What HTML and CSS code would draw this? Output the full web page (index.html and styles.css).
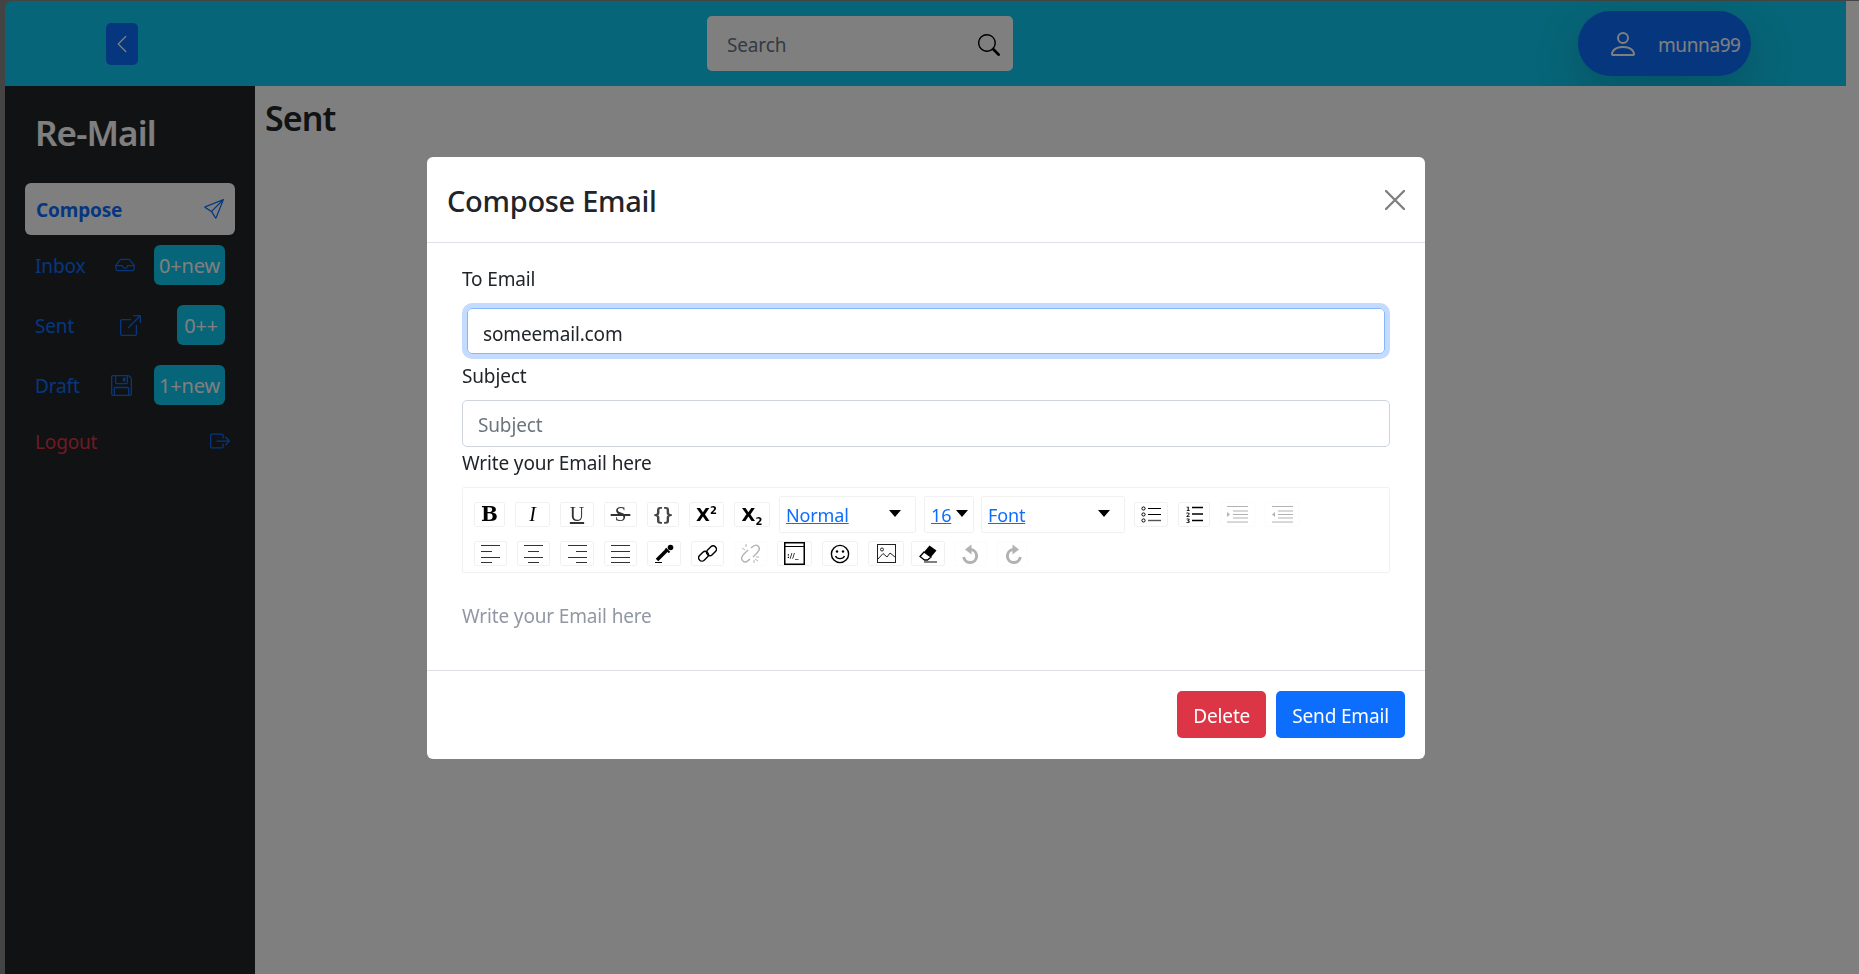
FILE: index.html
```html
<!doctype html>
<html>
<head>
<meta charset="utf-8">
<title>Re-Mail</title>
	<link rel="stylesheet" href="styles.css">
</head>
<body>
	<div class="frame">
		<div class="app">
			<div class="topbar">
				<div class="back">
					<svg width="20" height="20" viewBox="0 0 16 16" fill="#fff"><path fill-rule="evenodd" d="M11.354 1.646a.5.5 0 0 1 0 .708L5.707 8l5.647 5.646a.5.5 0 0 1-.708.708l-6-6a.5.5 0 0 1 0-.708l6-6a.5.5 0 0 1 .708 0z"/></svg>
				</div>
				<div class="search">
					<span>Search</span>
					<svg width="22" height="22" viewBox="0 0 16 16" fill="#000"><path d="M11.742 10.344a6.5 6.5 0 1 0-1.397 1.398h-.001c.03.04.062.078.098.115l3.85 3.85a1 1 0 0 0 1.415-1.414l-3.85-3.85a1.007 1.007 0 0 0-.115-.1zM12 6.5a5.5 5.5 0 1 1-11 0 5.5 5.5 0 0 1 11 0z"/></svg>
				</div>
				<div class="user">
					<svg width="32" height="32" viewBox="0 0 16 16" fill="#fff"><path d="M8 8a3 3 0 1 0 0-6 3 3 0 0 0 0 6zm2-3a2 2 0 1 1-4 0 2 2 0 0 1 4 0zm4 8c0 1-1 1-1 1H3s-1 0-1-1 1-4 6-4 6 3 6 4zm-1-.004c-.001-.246-.154-.986-.832-1.664C11.516 10.68 10.289 10 8 10c-2.29 0-3.516.68-4.168 1.332-.678.678-.83 1.418-.832 1.664h10z"/></svg>
					<span>munna99</span>
				</div>
			</div>
			<div class="under">
				<div class="sidebar">
					<div class="brand">Re-Mail</div>
					<div class="compose">
						<span>Compose</span>
						<svg width="20" height="20" viewBox="0 0 16 16" fill="#0d6efd"><path d="M15.854.146a.5.5 0 0 1 .11.54l-5.819 14.547a.75.75 0 0 1-1.329.124l-3.178-4.995L.643 7.184a.75.75 0 0 1 .124-1.33L15.314.037a.5.5 0 0 1 .54.11ZM6.636 10.07l2.761 4.338L14.13 2.576 6.636 10.07Zm6.787-8.201L1.591 6.602l4.339 2.76 7.494-7.493Z"/></svg>
					</div>
					<div class="navrow">
						<span>Inbox</span>
						<svg class="navicon" width="20" height="20" viewBox="0 0 16 16" fill="#0d6efd"><path d="M4.98 4a.5.5 0 0 0-.39.188L1.54 8H6a.5.5 0 0 1 .5.5 1.5 1.5 0 1 0 3 0A.5.5 0 0 1 10 8h4.46l-3.05-3.812A.5.5 0 0 0 11.02 4H4.98zm9.954 5H10.45a2.5 2.5 0 0 1-4.9 0H1.066l.32 2.562a.5.5 0 0 0 .497.438h12.234a.5.5 0 0 0 .496-.438L14.933 9zM3.809 3.563A1.5 1.5 0 0 1 4.981 3h6.038a1.5 1.5 0 0 1 1.172.563l3.7 4.625a.5.5 0 0 1 .105.374l-.39 3.124A1.5 1.5 0 0 1 14.117 13H1.883a1.5 1.5 0 0 1-1.489-1.314l-.39-3.124a.5.5 0 0 1 .106-.374l3.7-4.625z"/></svg>
						<span class="badge">0+new</span>
					</div>
					<div class="navrow">
						<span>Sent</span>
						<svg class="navicon" width="21" height="21" viewBox="0 0 16 16" fill="#0d6efd"><path d="M8.636 3.5a.5.5 0 0 0-.5-.5H1.5A1.5 1.5 0 0 0 0 4.5v10A1.5 1.5 0 0 0 1.5 16h10a1.5 1.5 0 0 0 1.5-1.5V7.864a.5.5 0 0 0-1 0V14.5a.5.5 0 0 1-.5.5h-10a.5.5 0 0 1-.5-.5v-10a.5.5 0 0 1 .5-.5h6.636a.5.5 0 0 0 .5-.5z"/><path d="M16 .5a.5.5 0 0 0-.5-.5h-5a.5.5 0 0 0 0 1h3.793L6.146 9.146a.5.5 0 1 0 .708.708L15 1.707V5.5a.5.5 0 0 0 1 0v-5z"/></svg>
						<span class="badge plus">0++</span>
					</div>
					<div class="navrow">
						<span>Draft</span>
						<svg class="navicon" width="21" height="21" viewBox="0 0 16 16" fill="#0d6efd"><path d="M11 2H9v3h2V2Z"/><path d="M1.5 0h11.586a1.5 1.5 0 0 1 1.06.44l1.415 1.414A1.5 1.5 0 0 1 16 2.914V14.5a1.5 1.5 0 0 1-1.5 1.5h-13A1.5 1.5 0 0 1 0 14.5v-13A1.5 1.5 0 0 1 1.5 0ZM1 1.5v13a.5.5 0 0 0 .5.5H2v-4.5A1.5 1.5 0 0 1 3.5 9h9a1.5 1.5 0 0 1 1.5 1.5V15h.5a.5.5 0 0 0 .5-.5V2.914a.5.5 0 0 0-.146-.353l-1.415-1.415A.5.5 0 0 0 13.086 1H13v4.5A1.5 1.5 0 0 1 11.5 7h-7A1.5 1.5 0 0 1 3 5.5V1H1.5a.5.5 0 0 0-.5.5Zm3 4a.5.5 0 0 0 .5.5h7a.5.5 0 0 0 .5-.5V1H4v4.5ZM3 15h10v-4.5a.5.5 0 0 0-.5-.5h-9a.5.5 0 0 0-.5.5V15Z"/></svg>
						<span class="badge">1+new</span>
					</div>
					<div class="navrow logout">
						<span>Logout</span>
						<svg width="20" height="20" viewBox="0 0 16 16" fill="#0d6efd"><path d="M10 12.5a.5.5 0 0 1-.5.5h-8a.5.5 0 0 1-.5-.5v-9a.5.5 0 0 1 .5-.5h8a.5.5 0 0 1 .5.5v2a.5.5 0 0 0 1 0v-2A1.5 1.5 0 0 0 9.5 2h-8A1.5 1.5 0 0 0 0 3.5v9A1.5 1.5 0 0 0 1.5 14h8a1.5 1.5 0 0 0 1.5-1.5v-2a.5.5 0 0 0-1 0v2z"/><path d="M15.854 8.354a.5.5 0 0 0 0-.708l-3-3a.5.5 0 0 0-.708.708L14.293 7.5H5.5a.5.5 0 0 0 0 1h8.793l-2.147 2.146a.5.5 0 0 0 .708.708l3-3z"/></svg>
					</div>
				</div>
				<div class="main">
					<h2 class="heading">Sent</h2>
				</div>
			</div>
		</div>
		<div class="gutter"></div>
	</div>

	<div class="backdrop">
		<div class="modal">
			<div class="modal-head">
				<div class="modal-title">Compose Email</div>
				<svg width="20" height="20" viewBox="0 0 20 20" stroke="#808080" stroke-width="2.4" stroke-linecap="round"><path d="M1 1L19 19M19 1L1 19"/></svg>
			</div>
			<div class="modal-body">
				<div class="label first">To Email</div>
				<div class="input focused">someemail.com</div>
				<div class="label second">Subject</div>
				<div class="input placeholder">Subject</div>
				<div class="label third">Write your Email here</div>

				<div class="toolbar">
					<div class="toolrow">
						<span class="tool w31 t-bold">B</span>
						<span class="tool w35 t-ital">I</span>
						<span class="tool w34 t-under">U</span>
						<span class="tool w33 t-strike"><span>&thinsp;S&thinsp;</span></span>
						<span class="tool w32 t-code">{}</span>
						<span class="tool w35 t-sup"><span>X<sup>2</sup></span></span>
						<span class="tool w36 t-sup"><span>X<sub>2</sub></span></span>
						<div class="drop w137 pull1"><a>Normal</a><i class="caret"></i></div>
						<div class="drop w50 pull2 tight"><a>16</a><i class="caret"></i></div>
						<div class="drop w144 pull3"><a>Font</a><i class="caret"></i></div>
						<span class="tool w34 pull1">
							<svg width="20" height="17" viewBox="0 0 20 17" fill="none" stroke="#000"><circle cx="2.5" cy="2.5" r="1.6"/><circle cx="2.5" cy="8.5" r="1.6"/><circle cx="2.5" cy="14.5" r="1.6"/><path d="M7 2.5H20M7 8.5H20"/><path d="M7 14.5H20" stroke="#555" stroke-width="1.4"/></svg>
						</span>
						<span class="tool w32">
							<svg width="17" height="17" viewBox="0 0 17 17" fill="#000"><text x="0" y="5" class="mini">1</text><text x="0" y="11" class="mini">2</text><text x="0" y="17" class="mini">3</text><path d="M6 1.5H17M6 8H17M6 14.5H17" stroke="#000" stroke-width="1.4"/></svg>
						</span>
						<span class="tool w35 off">
							<svg width="21" height="17" viewBox="0 0 21 17" fill="#000" stroke="none"><path d="M0 6L3 8.5L0 11Z"/><path d="M0 .5H21M6 5H21M6 8.5H21M6 12H21M0 16H21" stroke="#000" stroke-width="1.2"/></svg>
						</span>
						<span class="tool w35 off">
							<svg width="21" height="17" viewBox="0 0 21 17" fill="#000" stroke="none"><path d="M3 6L0 8.5L3 11Z"/><path d="M0 .5H21M6 5H21M6 8.5H21M6 12H21M0 16H21" stroke="#000" stroke-width="1.2"/></svg>
						</span>
					</div>
					<div class="toolrow">
						<span class="tool w33">
							<svg width="19" height="18" viewBox="0 0 19 18" stroke="#333"><path d="M0 .5H19M0 6.500H11M0 12.500H19M0 17.500H11"/></svg>
						</span>
						<span class="tool w33">
							<svg width="19" height="18" viewBox="0 0 19 18" stroke="#333"><path d="M0 .5H19M4 6.500H15M0 12.500H19M4 17.500H15"/></svg>
						</span>
						<span class="tool w34">
							<svg width="19" height="18" viewBox="0 0 19 18" stroke="#333"><path d="M0 .5H19M8 6.500H19M0 12.500H19M8 17.500H19"/></svg>
						</span>
						<span class="tool w33">
							<svg width="19" height="18" viewBox="0 0 19 18" stroke="#333"><path d="M0 .5H19M0 6.500H19M0 12.500H19M0 17.500H19"/></svg>
						</span>
						<span class="tool w34">
							<svg width="19" height="19" viewBox="0 0 19 19"><path d="M2 16L12 6" stroke="#000" stroke-width="3.500"/><path d="M10.500 4.500L14.500 8.500" stroke="#000" stroke-width="2"/><circle cx="15.500" cy="3.500" r="2.800" fill="#000"/><path d="M0 18.500H7" stroke="#000"/></svg>
						</span>
						<span class="tool w33">
							<svg width="19" height="19" viewBox="0 0 19 19" fill="none" stroke="#000" stroke-width="1.400"><rect x="0" y="9" width="11" height="6.500" rx="3.200" transform="rotate(-45 5.500 12.200)"/><rect x="8" y="3.500" width="11" height="6.500" rx="3.200" transform="rotate(-45 13.500 6.700)"/></svg>
						</span>
						<span class="tool w33 off">
							<svg width="19" height="19" viewBox="0 0 19 19" fill="none" stroke="#000" stroke-width="1.400"><path d="M7 6L3 10C0 13 0 15 2 17S6 18 9 15"/><path d="M12 13L16 9C19 6 19 4 17 2S13 1 10 4"/><path d="M1 4L4 6M5 0V3M14 15L17 17M18 13H15M13 16V19" stroke-width="1"/></svg>
						</span>
						<span class="tool w35">
							<svg width="21" height="23" viewBox="0 0 21 23"><rect x=".75" y=".75" width="19.500" height="21.500" fill="none" stroke="#000" stroke-width="1.500"/><path d="M0 4.500H21" stroke="#000"/><text x="3" y="16" class="mini wide">://_</text></svg>
						</span>
						<span class="tool w36">
							<svg width="20" height="20" viewBox="0 0 20 20" fill="none" stroke="#000" stroke-width="1.400"><circle cx="10" cy="10" r="8.600"/><circle cx="7" cy="7.500" r="1.200" fill="#000" stroke="none"/><circle cx="13" cy="7.500" r="1.200" fill="#000" stroke="none"/><path d="M5.500 12C7 15.500 13 15.500 14.500 12"/></svg>
						</span>
						<span class="tool w36">
							<svg width="19" height="19" viewBox="0 0 19 19" fill="none" stroke="#222"><rect x=".5" y=".5" width="18" height="18"/><circle cx="5" cy="5.500" r="1.500"/><path d="M1 15L6 9.500L10 13L13 9L18 13"/></svg>
						</span>
						<span class="tool w34 pull3">
							<svg width="19" height="19" viewBox="0 0 19 19"><path d="M10.500 1.500L17.500 6.500L12 13L5 8Z" fill="#000"/><path d="M5 8L1 12.500L5.500 16H8.500L12 13Z" fill="#fff" stroke="#000" stroke-width="1.300"/><path d="M5 18H18" stroke="#000"/></svg>
						</span>
						<span class="tool w32 off">
							<svg width="18" height="20" viewBox="0 0 18 20" fill="none"><path d="M1.700 13A6.500 6.500 0 1 0 9 5.600" stroke="#000" stroke-width="3"/><path d="M9.500 .5V10.500L3 5.500Z" fill="#000"/></svg>
						</span>
						<span class="tool w31 off">
							<svg width="18" height="20" viewBox="0 0 18 20" fill="none"><path d="M16.300 13A6.500 6.500 0 1 1 9 5.600" stroke="#000" stroke-width="3"/><path d="M8.500 .5V10.500L15 5.500Z" fill="#000"/></svg>
						</span>
					</div>
				</div>
				<div class="editor">Write your Email here</div>
			</div>
			<div class="modal-foot">
				<div class="btn red">Delete</div>
				<div class="btn blue">Send Email</div>
			</div>
		</div>
	</div>
</body>
</html>
```

FILE: styles.css
```css
*{
	margin: 0;
	padding: 0;
	box-sizing: border-box;
}
html, body{
	height: 100%;
	overflow: hidden;
}
body{
	font-family: "Noto Sans", sans-serif;
	font-size: 19px;
	letter-spacing: -0.15px;
	line-height: 27px;
	color: #212529;
}
.frame{
	display: flex;
	height: 974px;
	padding-top: 1px;
	padding-left: 5px;
	background-color: #888;
}
.app{
	flex: 1;
	display: flex;
	flex-direction: column;
}
.gutter{
	width: 13px;
	background-color: #fff;
}

/* top bar */
.topbar{
	height: 85px;
	display: flex;
	align-items: center;
	background-color: #0dcaf0;
	border-top-left-radius: 8px;
	padding-left: 101px;
}
.back{
	width: 32px;
	height: 42px;
	display: flex;
	align-items: center;
	justify-content: center;
	background-color: #0d6efd;
	border-radius: 5px;
}
.search{
	width: 306px;
	height: 55px;
	margin-left: 569px;
	padding: 2px 13px 0 20px;
	display: flex;
	align-items: center;
	justify-content: space-between;
	background-color: #fff;
	border-radius: 5px;
	color: #6c757d;
}
.search span{
	padding-top: 2px;
}
.user{
	width: 173px;
	height: 65px;
	margin-left: 565px;
	padding-left: 29px;
	display: flex;
	align-items: center;
	gap: 19px;
	background-color: #0d6efd;
	border-radius: 33px;
	box-shadow: 0 16px 48px rgba(0,0,0,.175);
	color: #fff;
}
.user span{
	padding-top: 4px;
	letter-spacing: -0.4px;
}

/* sidebar */
.under{
	flex: 1;
	display: flex;
}
.sidebar{
	width: 250px;
	padding-top: 22px;
	background-color: #212529;
}
.brand{
	margin-left: 30px;
	height: 75px;
	font-size: 35px;
	line-height: 50px;
	font-weight: 600;
	color: #fff;
	letter-spacing: -0.9px;
}
.compose{
	width: 210px;
	height: 52px;
	margin-left: 20px;
	margin-bottom: 10px;
	padding: 2px 11px 0 11px;
	display: flex;
	align-items: center;
	justify-content: space-between;
	background-color: #fff;
	border-radius: 6px;
	color: #0d6efd;
	font-weight: 700;
}
.compose svg{
	margin-top: -2px;
}
.navrow{
	width: 190px;
	height: 40px;
	margin-left: 30px;
	margin-bottom: 20px;
	display: flex;
	align-items: center;
	justify-content: space-between;
	color: #0d6efd;
}
.navrow span{
	padding-top: 2px;
}
.navicon{
	margin-left: 10px;
}
.navrow .badge{
	height: 40px;
	padding: 1px 5px 0;
	line-height: 40px;
	font-size: 20px;
	background-color: #0dcaf0;
	border-radius: 6px;
	color: #fff;
}
.navrow .badge.plus{
	padding: 1px 7px 0;
}
.logout{
	width: 195px;
	height: 32px;
	color: #dc3545;
}
.main{
	flex: 1;
	padding: 6px 0 0 10px;
	background-color: #fff;
}
.heading{
	font-size: 34px;
	line-height: 52px;
	font-weight: 600;
	letter-spacing: -0.9px;
}

/* modal */
.backdrop{
	position: fixed;
	top: 0;
	left: 0;
	width: 100%;
	height: 100%;
	padding: 157px 0 0 427px;
	background-color: rgba(0,0,0,.5);
}
.modal{
	width: 998px;
	height: 602px;
	display: flex;
	flex-direction: column;
	background-color: #fff;
	border-radius: 6px;
}
.modal-head{
	height: 86px;
	padding: 2px 20px 0;
	display: flex;
	align-items: center;
	justify-content: space-between;
	border-bottom: 1px solid #dee2e6;
}
.modal-head svg{
	margin-top: -2px;
}
.modal-title{
	font-size: 29px;
	font-weight: 500;
	letter-spacing: -0.3px;
}
.modal-body{
	flex: 1;
	padding: 23px 35px 0;
}
.label.first{
	margin-bottom: 15px;
}
.label.second{
	margin-top: 9px;
	margin-bottom: 10px;
}
.label.third{
	margin-top: 3px;
	margin-bottom: 10px;
}
.input{
	height: 47px;
	padding: 2px 15px 0;
	line-height: 45px;
	border: 1px solid #ced4da;
	border-radius: 5px;
}
.input.focused{
	height: 46px;
	margin: 0 5px;
	padding-top: 3px;
	line-height: 44px;
	border-color: #86b7fe;
	box-shadow: 0 0 0 5px rgba(13,110,253,.25);
}
.placeholder{
	color: #6c757d;
}

/* editor toolbar */
.toolbar{
	height: 86px;
	padding: 8px 0 0 11px;
	border: 1px solid #f1f1f1;
	border-radius: 2px;
}
.toolrow{
	display: flex;
	align-items: center;
	gap: 10px;
	margin-bottom: 8px;
}
.toolrow:last-child{
	height: 25px;
}
.tool{
	height: 25px;
	display: flex;
	align-items: center;
	justify-content: center;
	border: 1px solid #f1f1f1;
	border-radius: 2px;
	color: #000;
}
.tool.off{
	opacity: .3;
}
.t-bold{
	font-family: "DejaVu Serif", serif;
	font-weight: 700;
	font-size: 20px;
}
.t-ital{
	font-family: "Liberation Serif", serif;
	font-style: italic;
	font-size: 20px;
}
.t-under{
	font-family: "Liberation Serif", serif;
	font-size: 20px;
	text-decoration: underline;
	color: #333;
}
.t-strike{
	font-family: "Liberation Serif", serif;
	font-size: 21px;
	color: #333;
}
.t-strike span{
	text-decoration: line-through;
}
.t-code{
	font-family: "DejaVu Sans Mono", monospace;
	font-weight: 700;
	font-size: 18px;
	letter-spacing: -1px;
	color: #444;
	padding-right: 1px;
}
.t-sup{
	font-family: "DejaVu Sans", sans-serif;
	font-weight: 700;
	font-size: 18px;
	letter-spacing: 0;
}
.t-sup sup, .t-sup sub{
	font-size: 10px;
	line-height: 0;
}
.t-sup sup{
	vertical-align: 7px;
}
.t-sup sub{
	vertical-align: -4px;
}
.mini{
	font-family: "DejaVu Sans", sans-serif;
	font-size: 6px;
	font-weight: 700;
	letter-spacing: 0;
}
.mini.wide{
	font-size: 7px;
}
.w31{ width: 31px; }
.w32{ width: 32px; }
.w33{ width: 33px; }
.w34{ width: 34px; }
.w35{ width: 35px; }
.w36{ width: 36px; }
.w50{ width: 50px; }
.w137{ width: 137px; }
.w144{ width: 144px; }
.pull1{ margin-left: -1px; }
.pull2{ margin-left: -2px; }
.pull3{ margin-left: -3px; }
.drop{
	height: 37px;
	padding: 1px 14px 0 6px;
	display: flex;
	align-items: center;
	justify-content: space-between;
	border: 1px solid #f1f1f1;
	border-radius: 2px;
	font-size: 18px;
}
.drop.tight{
	padding-right: 5px;
}
.drop a{
	color: #0d6efd;
	text-decoration: underline;
}
.caret{
	margin-top: -4px;
	border-top: 7px solid #000;
	border-left: 6px solid transparent;
	border-right: 6px solid transparent;
}
.editor{
	margin-top: 30px;
	color: #9197a3;
}
.modal-foot{
	height: 89px;
	padding-top: 20px;
	padding-right: 20px;
	display: flex;
	justify-content: flex-end;
	gap: 10px;
	border-top: 1px solid #dee2e6;
}
.btn{
	height: 47px;
	padding: 2px 16px 0;
	line-height: 46px;
	border-radius: 5px;
	color: #fff;
}
.red{
	background-color: #dc3545;
}
.blue{
	background-color: #0d6efd;
}
```
